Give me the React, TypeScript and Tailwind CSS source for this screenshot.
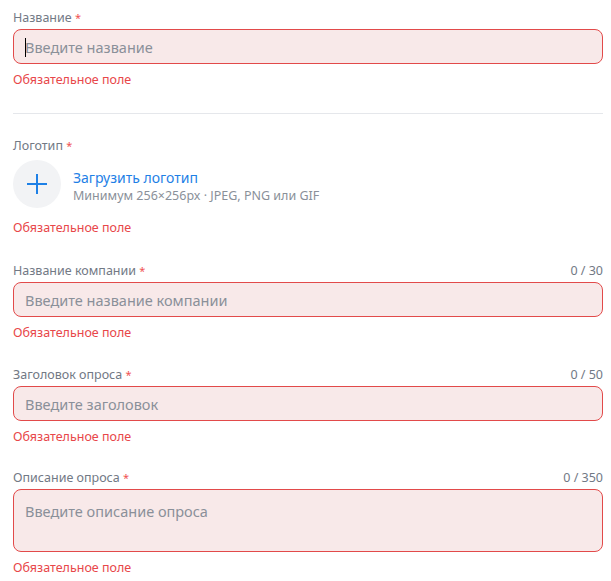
const font = { fontFamily: '"Noto Sans", "Open Sans", sans-serif' }

const Label = ({ text, counter }: { text: string; counter?: string }) => (
    <div className="flex justify-between h-[18px] pt-[2px] text-[12.5px] leading-[18px] text-[#727985]">
        <span>
            {text} <span className="text-[11px] text-[#f05252]">*</span>
        </span>
        {counter && <span>{counter}</span>}
    </div>
)

const ErrorText = ({ gap = "mt-[8px]" }: { gap?: string }) => (
    <div className={`${gap} h-[16px] text-[12.5px] leading-[16px] text-[#e8474a]`}>Обязательное поле</div>
)

const Field = ({ label, counter, placeholder, tall, caret }: any) => (
    <div>
        <Label text={label} counter={counter} />
        <div className={`relative mt-[4px] rounded-[8px] border border-[#e24a4a] bg-[#f8e9e9] px-[11px] ${tall ? "h-[63px] pt-[9px]" : "h-[35px] flex items-center"}`}>
            {caret && <span className="absolute left-[11px] top-[8px] h-[19px] w-px bg-black" />}
            <span className="text-[14.5px] leading-[20px] text-[#8a9099]">{placeholder}</span>
        </div>
        <ErrorText />
    </div>
)

export default function App() {
    return (
        <div style={font} className="w-[611px] h-[581px] bg-white pl-[13px] pr-[8px] pt-[7px] overflow-hidden">
            <Field label="Название" placeholder="Введите название" caret />
            <div className="mt-[25px] border-t border-[#e5e7eb]" />
            <div className="mt-[21px]">
                <Label text="Логотип" />
                <div className="mt-[7px] flex items-center gap-[12px]">
                    <div className="w-[48px] h-[48px] rounded-full bg-[#f2f3f5] flex items-center justify-center">
                        <svg width="22" height="22" viewBox="0 0 22 22" fill="none" stroke="#1e80e6" strokeWidth="2">
                            <path d="M11 1v20M1 11h20" />
                        </svg>
                    </div>
                    <div className="flex flex-col pt-[4px]">
                        <span className="text-[14px] leading-[18px] text-[#1e80e6]">Загрузить логотип</span>
                        <span className="text-[12.5px] leading-[17px] text-[#8a9099]">Минимум 256×256px · JPEG, PNG или GIF</span>
                    </div>
                </div>
                <ErrorText gap="mt-[12px]" />
            </div>
            <div className="mt-[24px]">
                <Field label="Название компании" counter="0 / 30" placeholder="Введите название компании" />
            </div>
            <div className="mt-[23px]">
                <Field label="Заголовок опроса" counter="0 / 50" placeholder="Введите заголовок" />
            </div>
            <div className="mt-[22px]">
                <Field label="Описание опроса" counter="0 / 350" placeholder="Введите описание опроса" tall />
            </div>
        </div>
    )
}
